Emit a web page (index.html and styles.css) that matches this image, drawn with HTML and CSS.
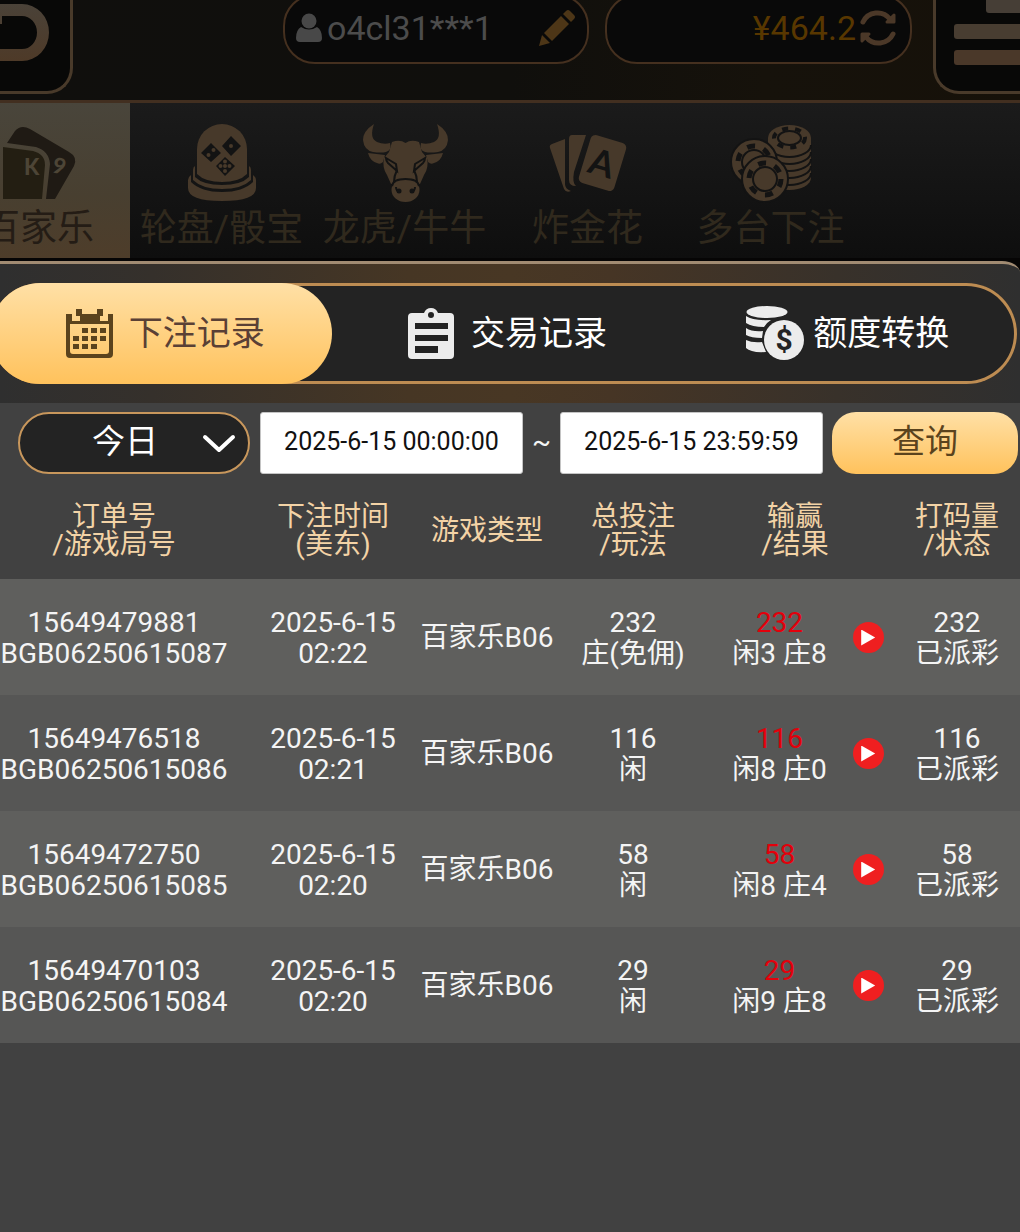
FILE: index.html
```html
<!DOCTYPE html>
<html lang="zh-CN">
<head>
<meta charset="utf-8">
<meta name="viewport" content="width=device-width, initial-scale=1">
<title>下注记录</title>
<link rel="stylesheet" href="styles.css">
</head>
<body>
<header class="topbar">
  <button class="corner corner-back" type="button" aria-label="返回">
    <svg width="70" height="92" viewBox="0 0 70 92"><defs><linearGradient id="fade" x1="0" y1="0" x2="0" y2="1"><stop offset="0" stop-color="#4a4238"/><stop offset="1" stop-color="#4e3a28"/></linearGradient></defs><path d="M0 4H22A27 28.500 0 0 1 22 61H0V49H22A15 16.500 0 0 0 22 16H2V24H0Z" fill="url(#fade)"/></svg>
  </button>
  <div class="pill pill-user">
    <svg width="26" height="30" viewBox="0 0 26 30" fill="#484848"><circle cx="13" cy="8" r="7.500"/><path d="M5 14Q13 19 21 14Q26 17 26 25Q26 29 22 29H4Q0 29 0 25Q0 17 5 14Z"/></svg>
    <span class="user-name">o4cl31***1</span>
    <button class="icon-btn push" type="button" aria-label="编辑">
      <svg width="38" height="38" viewBox="0 0 38 38" fill="#4d3617"><path d="M1 37L4 26L12 34Z"/><path d="M6 24L23 7L31 15L14 32Z"/><path d="M25 5L28 2Q30 0 32 2L36 6Q38 8 36 10L33 13Z"/></svg>
    </button>
  </div>
  <div class="pill pill-balance">
    <span class="balance">¥464.2</span>
    <button class="icon-btn" type="button" aria-label="刷新">
      <svg width="38" height="38" viewBox="0 0 38 38" fill="none" stroke="#4b3828" stroke-width="5"><path d="M4 13A16 16 0 0 1 31 10" stroke-linecap="round"/><path d="M34 25A16 16 0 0 1 7 28" stroke-linecap="round"/><path d="M35 6V13H28Z" fill="#4b3828" stroke-width="3" stroke-linejoin="round"/><path d="M3 32V25H10Z" fill="#4b3828" stroke-width="3" stroke-linejoin="round"/></svg>
    </button>
  </div>
  <button class="corner corner-menu" type="button" aria-label="菜单">
    <svg width="84" height="92" viewBox="0 0 84 92"><rect x="50" y="-4" width="44" height="17" rx="3" fill="#463e36"/><rect x="18" y="24" width="76" height="15" rx="3" fill="#483d31"/><rect x="18" y="50" width="76" height="15" rx="3" fill="#4a3829"/></svg>
  </button>
</header>

<nav class="games">
  <a class="game active" href="#baccarat">
    <svg class="game-icon" viewBox="0 0 86 84"><path d="M11 23L19 11Q25 4 34 9L73 32Q82 37 78 46L59 79H50L54 44Q53 31 40 27Z" fill="#1f1a14"/><path d="M7 27L37 31Q49 34 49 45L46 79H7Z" fill="#231e12"/><text class="card-face" x="28" y="55">K</text><text class="card-face" x="57" y="54" transform="rotate(14 64 46)">9</text></svg>
    <span>百家乐</span>
  </a>
  <a class="game" href="#roulette">
    <svg class="game-icon" viewBox="0 0 86 84"><path d="M18 29a25 25 0 0 1 50 0V54Q60 62 43 62T18 54Z"/><path d="M16 46V57Q24 65 43 65T70 57V46Q72 47 72 50V60Q63 69 43 69T14 60V50Q14 47 16 46Z"/><path d="M12 55V62Q22 72 43 72T74 62V55Q77 57 77 60V68Q77 81 43 81T9 68V60Q9 57 12 55Z"/><g class="ink"><path d="M32 23L42 33L32 42L22 33ZM52 16L62 26L52 36L43 26ZM46 37L56 46L46 56L37 46Z"/></g><circle cx="29.500" cy="35" r="2"/><circle cx="34.500" cy="30" r="2"/><circle cx="52" cy="26" r="2"/><circle cx="46" cy="46" r="2"/><circle cx="41.500" cy="46" r="2"/><circle cx="50.500" cy="46" r="2"/><circle cx="46" cy="41.500" r="2"/><circle cx="46" cy="51" r="2"/></svg>
    <span>轮盘/骰宝</span>
  </a>
  <a class="game" href="#dragon-tiger">
    <svg class="game-icon" viewBox="0 0 86 84"><defs><g id="horn"><path d="M12 4Q1 11 1 20Q2 30 11 32Q19 33 24 32Q30 30 28 23Q22 25 15 22Q7 18 12 4Z"/><path d="M6 33L23 35L21 42Q18 45 15 43Q8 41 6 33Z"/></g></defs><use href="#horn"/><use href="#horn" transform="translate(87) scale(-1 1)"/><path d="M30 22Q38 19 43.500 23Q49 19 57 22L60 32L65 38Q67 48 62 55L58 64H29L25 55Q20 48 22 38L27 32Z"/><g class="ink-line"><path d="M24 38L34 44L35 51L26 43Q24 41 24 38ZM63 38L53 44L52 51L61 43Q63 41 63 38Z"/><path d="M35 50Q32 56 32 62M52 50Q55 56 55 62"/></g><ellipse cx="43.500" cy="70" rx="14" ry="12"/><path class="ink-line" d="M30 66Q31 59 43.500 59T57 66M34 67Q34 71 38 72M53 67Q53 71 49 72"/><g class="ink"><circle cx="37" cy="71" r="2.500"/><circle cx="50" cy="71" r="2.500"/></g></svg>
    <span>龙虎/牛牛</span>
  </a>
  <a class="game" href="#golden-flower">
    <svg class="game-icon" viewBox="0 0 86 84"><path d="M7 24L20 19V64Q20 69 26 71Q21 73 19 69L5 28Q4 25 7 24Z"/><path d="M24 19Q24 15 27 15H41L29 52Q27 63 31 66Q24 66 24 60Z"/><rect x="39" y="18" width="37" height="50" rx="5" transform="rotate(17 57.500 43)"/><text class="card-ace" x="57" y="56" text-anchor="middle" transform="rotate(17 57.500 43)">A</text></svg>
    <span>炸金花</span>
  </a>
  <a class="game" href="#multi">
    <svg class="game-icon" viewBox="0 0 86 84"><defs><g id="chip"><circle class="chip-edge" r="23"/><circle class="ink-line chip-notch" r="16"/><circle class="ink-line" r="12"/></g></defs><path d="M40 18V58A21.500 12 0 0 0 83 58V18Z"/><path class="ink-line" d="M40 25A21.500 12 0 0 0 83 25M40 32A21.500 12 0 0 0 83 32M40 39A21.500 12 0 0 0 83 39M40 46A21.500 12 0 0 0 83 46M40 53A21.500 12 0 0 0 83 53"/><ellipse cx="61.500" cy="18" rx="21.500" ry="13"/><ellipse class="ink-line chip-dash" cx="61.500" cy="18" rx="15.500" ry="9.500"/><ellipse class="ink-line" cx="61.500" cy="18" rx="11.500" ry="7"/><use href="#chip" x="26" y="42"/><use href="#chip" x="37" y="59"/></svg>
    <span>多台下注</span>
  </a>
</nav>

<main class="panel">
  <div class="tabs-band">
    <div class="tabs" role="tablist">
      <button class="tab active" type="button" role="tab" aria-selected="true">
        <svg class="tab-icon" viewBox="0 0 58 58"><path fill="#5b431d" fill-rule="evenodd" d="M4 10H10V17H18V10H24V17H32V10H38V17H46V10H51V50Q51 54 47 54H8Q4 54 4 50ZM8 20V47Q8 50 11 50H44Q47 50 47 47V20Z"/><path fill="#5b431d" d="M23 10H32V18H23ZM14 5H20V12H14ZM35 5H41V12H35ZM20 24H26V29H20ZM29 24H35V29H29ZM38 24H44V29H38ZM11 32H17V37H11ZM20 32H26V37H20ZM29 32H35V37H29ZM38 32H44V37H38ZM11 40H17V45H11ZM20 40H26V45H20ZM29 40H35V45H29Z"/></svg>
        <span>下注记录</span>
      </button>
      <button class="tab" type="button" role="tab" aria-selected="false">
        <svg class="tab-icon" viewBox="0 0 58 58"><path fill="#ececec" fill-rule="evenodd" d="M8 9H20Q22 4 27 4T34 9H46Q50 9 50 13V51Q50 55 46 55H8Q4 55 4 51V13Q4 9 8 9ZM27 8A3 3 0 1 0 27 14A3 3 0 1 0 27 8ZM11 19V25H44V19ZM11 31V37H44V31ZM11 42V49H34V42Z"/></svg>
        <span>交易记录</span>
      </button>
      <button class="tab" type="button" role="tab" aria-selected="false">
        <svg class="tab-icon" viewBox="0 0 58 58" fill="#ececec"><ellipse cx="21" cy="8" rx="20.500" ry="6"/><path d="M0 12Q7 17 25 16Q20 19 18 23Q6 23 0 19Z"/><path d="M0 24Q6 28 17 27L16 34Q5 34 0 31Z"/><path d="M0 36Q6 39 16 38L20 48Q5 49 0 44Z"/><circle cx="38" cy="36" r="21" fill="#232323"/><circle cx="38" cy="36" r="20"/><text class="coin-mark" x="38" y="46" text-anchor="middle">$</text></svg>
        <span>额度转换</span>
      </button>
    </div>
  </div>

  <form class="filters">
    <div class="range">
      <select class="range-select" aria-label="日期范围"><option>今日</option></select>
      <svg class="range-arrow" width="34" height="22" viewBox="0 0 34 22"><path d="M3 4L17 17L31 4" fill="none" stroke="#fff" stroke-width="4" stroke-linecap="round" stroke-linejoin="round"/></svg>
    </div>
    <input class="date" type="text" aria-label="开始时间" value="2025-6-15 00:00:00">
    <span class="tilde">~</span>
    <input class="date" type="text" aria-label="结束时间" value="2025-6-15 23:59:59">
    <button class="query" type="button">查询</button>
  </form>

  <table class="records">
    <colgroup><col class="c-order"><col class="c-time"><col class="c-game"><col class="c-bet"><col class="c-result"><col class="c-status"></colgroup>
    <thead>
      <tr><th class="order">订单号<br>/游戏局号</th><th>下注时间<br>(美东)</th><th>游戏类型</th><th>总投注<br>/玩法</th><th class="result-head">输赢<br>/结果</th><th>打码量<br>/状态</th></tr>
    </thead>
    <tbody>
      <tr><td class="order">15649479881<br>BGB06250615087</td><td>2025-6-15<br>02:22</td><td>百家乐B06</td><td>232<br>庄(免佣)</td><td><div class="result"><span><b class="win">232</b><br>闲3 庄8</span><button class="play" type="button" aria-label="播放"></button></div></td><td>232<br>已派彩</td></tr>
      <tr><td class="order">15649476518<br>BGB06250615086</td><td>2025-6-15<br>02:21</td><td>百家乐B06</td><td>116<br>闲</td><td><div class="result"><span><b class="win">116</b><br>闲8 庄0</span><button class="play" type="button" aria-label="播放"></button></div></td><td>116<br>已派彩</td></tr>
      <tr><td class="order">15649472750<br>BGB06250615085</td><td>2025-6-15<br>02:20</td><td>百家乐B06</td><td>58<br>闲</td><td><div class="result"><span><b class="win">58</b><br>闲8 庄4</span><button class="play" type="button" aria-label="播放"></button></div></td><td>58<br>已派彩</td></tr>
      <tr><td class="order">15649470103<br>BGB06250615084</td><td>2025-6-15<br>02:20</td><td>百家乐B06</td><td>29<br>闲</td><td><div class="result"><span><b class="win">29</b><br>闲9 庄8</span><button class="play" type="button" aria-label="播放"></button></div></td><td>29<br>已派彩</td></tr>
    </tbody>
  </table>
</main>
</body>
</html>
```

FILE: styles.css
```css
* { box-sizing: border-box; }

body {
  margin: 0;
  min-height: 100vh;
  display: flex;
  flex-direction: column;
  overflow-x: hidden;
  background: #060505;
  color: #f4f4f4;
  font-family: Roboto, "Noto Sans CJK SC", sans-serif;
}

button, input, select { font-family: inherit; margin: 0; }
button { border: 0; padding: 0; background: none; color: inherit; cursor: pointer; }
svg { display: block; flex: none; }

/* account bar */
.topbar {
  display: flex;
  align-items: flex-start;
  height: 103px;
  overflow: hidden;
  border-bottom: 3px solid #422f20;
  background: linear-gradient(90deg, #100f0d 0%, #100f0c 50%, #16120b 75%, #161109 100%);
}
.corner { height: 94px; background: #080807; border: 3px solid #493a2a; border-top: 0; }
.corner-back { width: 73px; border-left: 0; border-radius: 0 0 26px 0; }
.corner-menu { width: 87px; margin-left: 21px; border-right: 0; border-radius: 0 0 0 26px; overflow: hidden; }
.pill {
  display: flex;
  align-items: center;
  height: 70px;
  margin-top: -6px;
  padding-bottom: 2px;
  border: 2px solid #45301f;
  border-radius: 32px;
  background: #090909;
  font-size: 34px;
  line-height: 40px;
}
.pill-user { width: 306px; margin-left: auto; padding-left: 11px; padding-right: 11px; gap: 5px; color: #4c4c4c; }
.pill-balance { width: 307px; margin-left: 16px; padding-right: 13px; gap: 3px; justify-content: flex-end; }
.balance { color: #583700; }
.push { margin-left: auto; }

/* game categories */
.games {
  display: flex;
  height: 155px;
  margin-left: -53px;
  background: linear-gradient(#1b1b1b, #0e0e0e);
}
.game {
  display: flex;
  flex-direction: column;
  align-items: center;
  flex: none;
  width: 183px;
  padding-top: 17px;
  color: #30291d;
  font-size: 37px;
  line-height: 49px;
  text-decoration: none;
  white-space: nowrap;
}
.game.active { color: #241c15; background: linear-gradient(#49453b, #483f30 60%, #4e3d2a); }
.game-icon { width: 86px; height: 84px; fill: #47392a; }
.game-icon .ink { fill: #131313; }
.ink-line { fill: none; stroke: #131313; stroke-width: 2px; }
.chip-dash { stroke-width: 4px; stroke-dasharray: 6 7; }
.chip-notch { stroke-width: 5px; stroke-dasharray: 8 9; }
.chip-edge { stroke: #131313; stroke-width: 2px; }
.card-face { font-family: Lato, sans-serif; font-size: 22px; font-weight: 900; fill: #4d4536; }
.game-icon .card-ace { font-family: Lato, sans-serif; font-size: 36px; font-weight: 700; fill: #131313; }

/* records panel */
.panel {
  flex: 1;
  margin-top: 3px;
  border-top: 3px solid #a18b72;
  border-top-right-radius: 18px 12px;
  overflow: hidden;
  background: #414141;
}
.tabs-band {
  padding: 19px 3px 19px 0;
  background: linear-gradient(90deg, #2f2f2f 0%, #35302b 15%, #463624 40%, #483724 50%, #463525 60%, #38312a 82%, #2f2f2f 100%);
}
.tabs {
  display: flex;
  height: 101px;
  margin-left: -10px;
  border-radius: 51px;
  background: #232323;
  box-shadow: inset 0 0 0 3px #bd8c52;
}
.tab {
  flex: 1;
  display: flex;
  align-items: center;
  justify-content: center;
  gap: 9px;
  padding: 0 0 2px 4px;
  border-radius: 51px;
  font-size: 34px;
  line-height: 40px;
  color: #fff;
  white-space: nowrap;
}
.tab.active { color: #5a4035; background: linear-gradient(#ffe0a6, #ffc25c); }
.tab-icon { width: 58px; height: 58px; }
.coin-mark { font-size: 30px; font-weight: 700; fill: #232323; }

/* search form */
.filters { display: flex; align-items: center; padding: 9px 2px 5px 18px; }
.range { position: relative; flex: 232; margin-right: 10px; }
.range-select {
  display: block;
  width: 100%;
  height: 62px;
  padding: 0 18px 2px 0;
  border: 2px solid #c8975c;
  border-radius: 31px;
  appearance: none;
  background: #232323;
  color: #fff;
  font-size: 33px;
  line-height: 40px;
  text-align: center;
  text-align-last: center;
}
.range-arrow { position: absolute; right: 14px; top: 21px; pointer-events: none; }
.date {
  flex: 261;
  min-width: 0;
  height: 62px;
  padding: 0 0 4px;
  border: 1px solid #c4c4c4;
  border-radius: 3px;
  background: #fff;
  color: #111;
  font-size: 25px;
  text-align: center;
}
.tilde { width: 37px; padding-bottom: 2px; font-size: 28px; line-height: 32px; text-align: center; }
.query {
  flex: 186;
  height: 62px;
  margin-left: 9px;
  padding-bottom: 2px;
  border-radius: 24px;
  background: linear-gradient(#ffe0a6, #ffc25c);
  color: #5b431d;
  font-size: 33px;
  line-height: 40px;
}

/* bet records */
.records {
  width: 100%;
  table-layout: fixed;
  border-collapse: collapse;
  font-size: 28px;
  line-height: 31px;
  text-align: center;
}
.c-order { width: 248px; }
.c-time { width: 170px; }
.c-game { width: 138px; }
.c-bet { width: 154px; }
.c-result { width: 184px; }
.c-status { width: 126px; }
.records th, .records td { padding: 0; white-space: nowrap; vertical-align: middle; }
.records th { height: 100px; padding-top: 3px; font-weight: 400; line-height: 28px; color: #f3d3a6; }
.records td { height: 116px; padding-top: 1px; }
.records .order { padding-right: 20px; }
.records .result-head { padding-right: 14px; }
.records tbody tr:nth-child(odd) { background: #5f5f5d; }
.records tbody tr:nth-child(even) { background: #565655; }
.result { display: flex; align-items: center; justify-content: center; gap: 26px; padding-left: 12px; }
.win { font-weight: 400; color: #e3000b; }
.play { display: flex; align-items: center; justify-content: center; width: 31px; height: 31px; border-radius: 50%; background: #ef1f20; }
.play::before {
  content: "";
  width: 14px;
  height: 16px;
  background: #fff;
  clip-path: polygon(0 0, 100% 50%, 0 100%);
}
```
